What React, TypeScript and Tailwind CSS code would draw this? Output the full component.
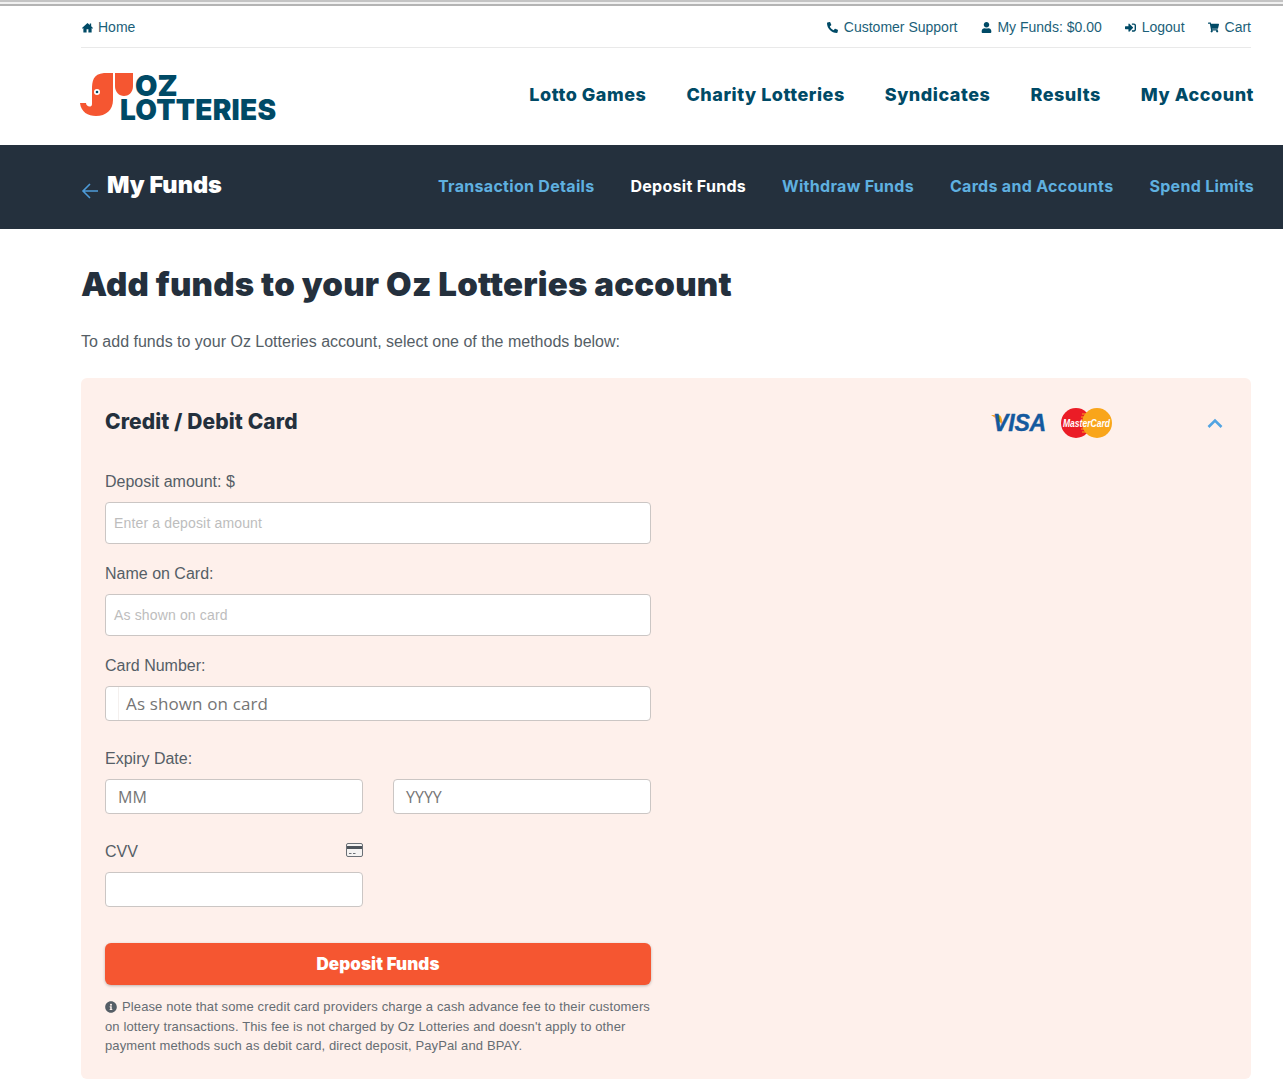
import React from 'react';
import { FaPhone, FaUser, FaSignInAlt, FaShoppingCart, FaInfoCircle } from 'react-icons/fa';

const display = { fontFamily: 'Inter, sans-serif' };

const Elephant = () => (
  <svg width="56" height="46" viewBox="0 0 56 46" className="shrink-0">
    <path d="M24 1 C13 2 12 9 12 18 L12 32 C12 36 6 35 6 31 L0 31 C1 40 8 44 16 44 C26 44 33 38 33 28 L33 1 Z" fill="#f55631" />
    <path d="M35 1 H53 V14 C53 21 48 24 44 24 C39 24 35 20 35 14 Z" fill="#f55631" />
    <circle cx="17" cy="20" r="3" fill="#fff" />
    <circle cx="17" cy="20" r="1.3" fill="#004a66" />
  </svg>
);

const Logo = () => (
  <div className="flex w-[197px] items-start">
    <Elephant />
    <div className="-ml-[16px] mt-[2px] flex flex-col font-black text-[#004a66]" style={display}>
      <span className="ml-[15px] h-[24px] text-[29px] leading-[24px]">OZ</span>
      <span className="h-[24px] text-[28px] leading-[24px] tracking-[0.25px]">LOTTERIES</span>
    </div>
  </div>
);

const HomeIcon = () => (
  <svg width="11" height="11" viewBox="0 0 24 24" fill="currentColor" className="ml-[1px]">
    <path d="M12 2 0 13l1.5 1.6L3 13.3V23h7v-7h4v7h7v-9.7l1.5 1.3L24 13l-4-3.7V3h-3v3.5z" />
  </svg>
);

const CardIcon = () => (
  <svg width="17" height="14" viewBox="0 0 17 14" className="shrink-0">
    <rect x="0.5" y="0.5" width="16" height="13" rx="1.5" fill="#f5f3f2" stroke="#6b7076" />
    <rect x="1" y="3" width="15" height="3" fill="#4e545b" />
    <path d="M3 10.5h2.5M7 10.5h2.5" stroke="#6b7076" />
  </svg>
);

const TopLink = ({ icon, label }: { icon: React.ReactNode; label: string }) => (
  <a className="flex items-center gap-[5px] text-[14px] text-[#1b5f79]">
    <span className="flex w-[12px] justify-center text-[11px] text-[#004a66]">{icon}</span>
    {label}
  </a>
);

const Field = ({ label, placeholder }: { label: string; placeholder: string }) => (
  <div className="mb-[20px]">
    <label className="mb-[10px] block h-[20px] text-[16px] leading-[20px] text-[#555e66]">{label}</label>
    <div className="flex h-[42px] items-center rounded-[4px] border border-[#cbc6c4] bg-white px-[8px] text-[14px] tracking-[0.15px] text-[#bdbdbd]">
      {placeholder}
    </div>
  </div>
);

const SmallInput = ({ text }: { text?: string }) => (
  <div className="flex h-[35px] items-center rounded-[4px] border border-[#cbc6c4] bg-white px-[12px] text-[16px] text-[#757575]" style={{ fontFamily: '"Open Sans", sans-serif' }}>
    {text}
  </div>
);

const App = () => {
  const subNav = ['Transaction Details', 'Deposit Funds', 'Withdraw Funds', 'Cards and Accounts', 'Spend Limits'];
  return (
    <div className="min-h-[1092px] bg-white" style={{ fontFamily: '"Liberation Sans", Arial, sans-serif' }}>
      <div className="h-[6px] border-y-2 border-t-[#c4c4c4] border-b-[#b4b4b4] bg-[#f1f1f1]" />

      <header className="pl-[81px] pr-[32px]">
        <div className="flex h-[42px] items-center justify-between border-b border-[#e9e9e9] pt-[2px]">
          <TopLink icon={<HomeIcon />} label="Home" />
          <div className="flex items-center gap-[23px]">
            <TopLink icon={<FaPhone className="scale-x-[-1]" />} label="Customer Support" />
            <TopLink icon={<FaUser />} label="My Funds: $0.00" />
            <TopLink icon={<FaSignInAlt />} label="Logout" />
            <TopLink icon={<FaShoppingCart />} label="Cart" />
          </div>
        </div>
        <div className="-mr-[3px] flex h-[97px] items-center justify-between">
          <div className="-ml-[1px]">
            <Logo />
          </div>
          <nav className="mb-[5px] flex gap-[40px] text-[18px] font-extrabold tracking-[0.53px] text-[#004a66]" style={display}>
            <a>Lotto Games</a>
            <a>Charity Lotteries</a>
            <a>Syndicates</a>
            <a>Results</a>
            <a>My Account</a>
          </nav>
        </div>
      </header>

      <div className="flex h-[84px] items-center justify-between bg-[#24303d] pl-[81px] pr-[29px]">
        <div className="flex items-center gap-[8px]">
          <svg width="18" height="16" viewBox="0 0 18 16" className="mt-[7px]" fill="none" stroke="#4d9ad8" strokeWidth="1.6">
            <path d="M17 8H2M9 1 2 8l7 7" />
          </svg>
          <h2 className="mb-[4px] text-[23.5px] font-black text-white" style={display}>My Funds</h2>
        </div>
        <nav className="mb-[2px] flex gap-[36px] text-[16px] font-bold tracking-[0.3px]" style={display}>
          {subNav.map((item) => (
            <a key={item} className={item === 'Deposit Funds' ? 'text-white' : 'text-[#5fb0e0]'}>{item}</a>
          ))}
        </nav>
      </div>

      <main className="px-[32px] pl-[81px]">
        <h1 className="mt-[33px] text-[33px] leading-[45px] font-black tracking-[0.2px] text-[#24303d]" style={display}>
          Add funds to your Oz Lotteries account
        </h1>
        <p className="mt-[23px] text-[16px] leading-[24px] text-[#555e66]">
          To add funds to your Oz Lotteries account, select one of the methods below:
        </p>

        <section className="mt-[24px] h-[701px] w-[1170px] rounded-[6px] bg-[#fef0eb] px-[24px] pt-[29px]">
          <div className="relative flex h-[32px] items-center justify-between">
            <h3 className="mb-[2px] text-[21px] font-extrabold tracking-[0.1px] text-[#24303d]" style={display}>Credit / Debit Card</h3>
            <div className="flex items-center">
              <div className="relative mr-[15px] text-[23px] leading-none font-bold italic tracking-[-0.2px] text-[#14599e] [-webkit-text-stroke:0.4px_#14599e]">
                <svg width="14" height="14" viewBox="0 0 14 14" className="absolute -left-[2px] top-[3px]">
                  <path d="M0 0h7c2 0 3 1 3.500 3L13 13C10 7 5 3 0 0z" fill="#f4a51f" />
                </svg>
                <span className="relative">VISA</span>
              </div>
              <svg width="51" height="30" viewBox="0 0 51 30" className="mr-[95px] overflow-visible">
                <circle cx="15" cy="15" r="15" fill="#eb1c26" />
                <circle cx="36" cy="15" r="15" fill="#f9a51a" />
                <path d="M21 6h9M20 9h11M20 21h11M21 24h9" stroke="#f9a51a" strokeWidth="1" />
                <text x="25.500" y="19" textAnchor="middle" fontSize="10" fontWeight="700" fontStyle="italic" fill="#fff" fontFamily="Liberation Sans" textLength="47" lengthAdjust="spacingAndGlyphs">MasterCard</text>
              </svg>
              <svg width="16" height="10" viewBox="0 0 16 10" className="mb-[1px] mr-[4px]" fill="none" stroke="#52a4e2" strokeWidth="2.6">
                <path d="M1.500 9 8 2.500 14.500 9" />
              </svg>
            </div>
          </div>

          <div className="mt-[33px] w-[546px]">
            <Field label="Deposit amount: $" placeholder="Enter a deposit amount" />
            <Field label="Name on Card:" placeholder="As shown on card" />

            <div className="mb-[28px]">
              <label className="mb-[10px] block h-[20px] text-[16px] leading-[20px] text-[#555e66]">Card Number:</label>
              <div className="flex h-[35px] rounded-[4px] border border-[#cbc6c4] bg-white pl-[12px]">
                <div className="flex flex-1 items-center border-l border-[#f4f0ee] pl-[7px] text-[17px] tracking-[0.13px] text-[#757575]" style={{ fontFamily: '"Open Sans", sans-serif' }}>
                  As shown on card
                </div>
              </div>
            </div>

            <label className="mb-[10px] block h-[20px] text-[16px] leading-[20px] text-[#555e66]">Expiry Date:</label>
            <div className="mb-[28px] grid grid-cols-2 gap-[30px]">
              <SmallInput text="MM" />
              <SmallInput text="YYYY" />
            </div>

            <div className="mb-[10px] flex h-[20px] w-[258px] items-center justify-between text-[16px] leading-[20px] text-[#555e66]">
              <label>CVV</label>
              <span className="mb-[4px]"><CardIcon /></span>
            </div>
            <div className="w-[258px]">
              <SmallInput />
            </div>

            <button className="mt-[36px] h-[42px] w-full rounded-[6px] bg-[#f55631] pt-[2px] text-[17px] font-black tracking-[0.1px] text-white shadow-[0_1px_3px_rgba(0,0,0,0.25)]" style={display}>
              Deposit Funds
            </button>
            <p className="mt-[12px] text-[13px] leading-[19.5px] tracking-[0.12px] text-[#666d73]">
              <FaInfoCircle className="mr-[5px] inline-block -translate-y-[1px] text-[12px] text-[#555e66]" />
              Please note that some credit card providers charge a cash advance fee to their customers on lottery transactions. This fee is not charged by Oz Lotteries and doesn&apos;t apply to other payment methods such as debit card, direct deposit, PayPal and BPAY.
            </p>
          </div>
        </section>
      </main>
    </div>
  );
};

export default App;
